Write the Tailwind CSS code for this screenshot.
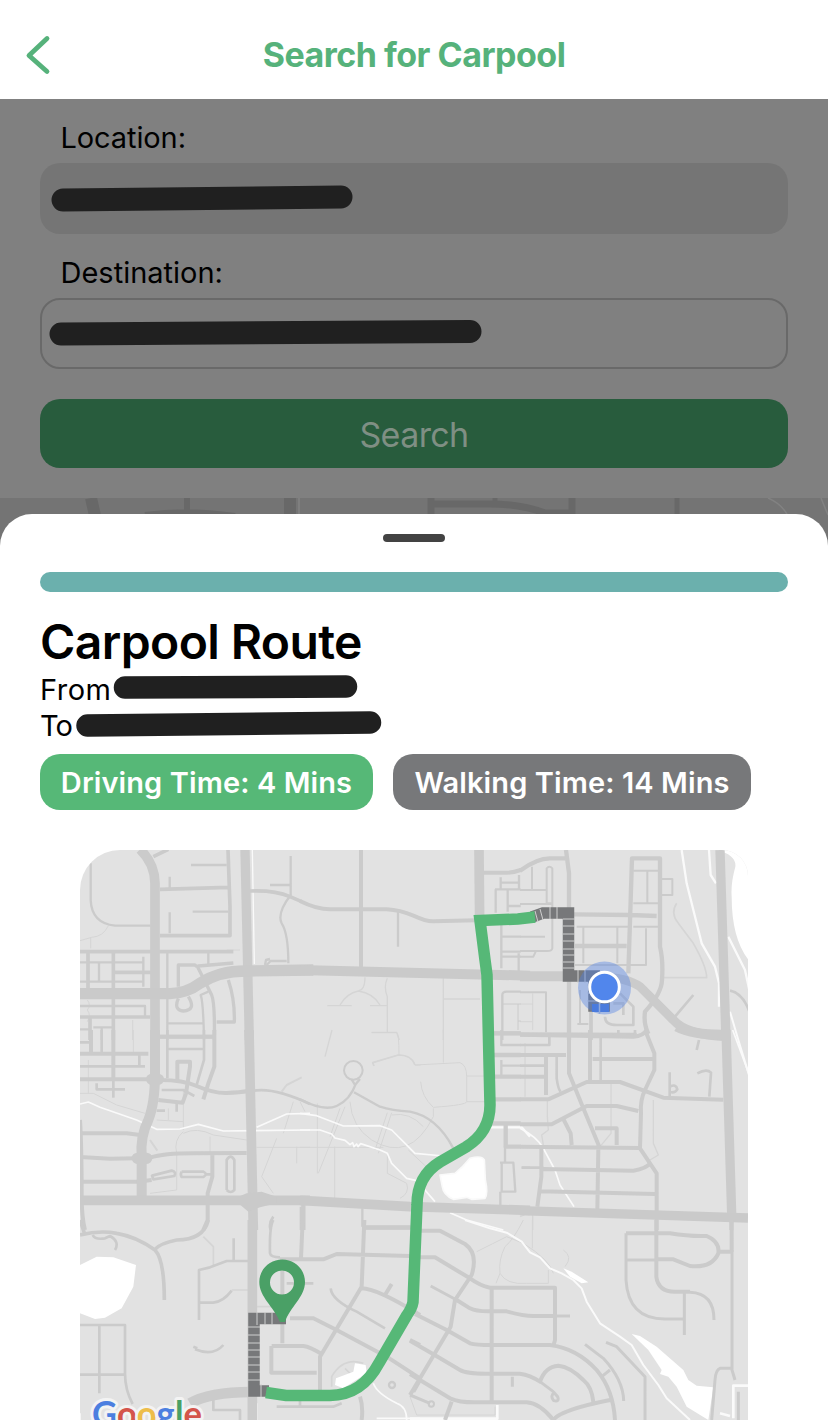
<!DOCTYPE html>
<html lang="en">
<head>
<meta charset="utf-8">
<title>Search for Carpool</title>
<script src="https://cdn.jsdelivr.net/npm/@tailwindcss/browser@4"></script>
</head>
<body class="bg-white">
<div class="w-[828px] h-[1420px] overflow-hidden flex flex-col font-['Inter',sans-serif] text-black">
  <header class="h-[99px] shrink-0 grid grid-cols-[80px_1fr_80px] pt-[11px] items-center bg-white">
    <svg class="w-[26px] h-[42px] ml-[25px]" viewBox="0 0 26 42" fill="none" stroke="#56b27b" stroke-width="4.800" stroke-linecap="round" stroke-linejoin="round"><path d="M22 4.500L4 21.500L22 37.500"/></svg>
    <h1 class="text-center text-[34px] leading-[40px] font-bold tracking-[-0.5px] text-[#56b27b] whitespace-nowrap">Search for Carpool</h1>
  </header>
  <section class="h-[399px] shrink-0 bg-[#808080] px-10 flex flex-col">
    <label class="h-16 pt-5 pl-[20.500px] text-[29px] leading-[38px] tracking-[-0.1px]">Location:</label>
    <div class="h-[71px] rounded-[20px] bg-[#757575]">
      <svg class="block w-full h-full" viewBox="40 163 748 71"><path d="M63 200L341 197" stroke="#202020" stroke-width="23" stroke-linecap="round"/></svg>
    </div>
    <label class="h-16 pt-5 pl-[20.500px] text-[29px] leading-[38px]">Destination:</label>
    <div class="h-[71px] rounded-[20px] border-2 border-[#696969]">
      <svg class="block w-full h-full" viewBox="42 300 744 67"><path d="M61 334L470 331.500" stroke="#202020" stroke-width="23" stroke-linecap="round"/></svg>
    </div>
    <button class="mt-[30px] h-[69px] shrink-0 rounded-[20px] bg-[#285c3d] text-[#7f8f84] text-[34px] leading-[40px] tracking-[-0.6px] pt-[2px]">Search</button>
  </section>
  <div class="h-4 shrink-0 relative bg-[#747474]">
    <svg class="absolute left-0 top-0 w-[828px] h-[50px]" viewBox="0 498 828 50" fill="none" stroke="#686868">
      <rect x="0" y="498" width="828" height="50" fill="#747474" stroke="none"/>
      <path d="M91 498L96 520M290 498V530" stroke-width="12"/><path d="M187 498V513M145 515Q187 509 235 516" stroke-width="6"/>
      <path d="M431 498V520M431 504H490Q520 504 545 513H572M572 498V520" stroke-width="7"/><path d="M495 498V504M677 498V520" stroke-width="5"/>
      <path d="M299 498V520M768 498Q782 504 788 516M821 498L828 515" stroke="#828282" stroke-width="1.500"/>
    </svg>
  </div>
  <main class="relative flex-1 bg-white rounded-t-[32px] px-10 pt-5 flex flex-col">
    <div class="w-[62px] h-2 shrink-0 rounded-full bg-[#434343] self-center"></div>
    <div class="h-5 shrink-0 mt-[30px] rounded-full bg-[#6bb0ad]"></div>
    <h2 class="mt-5 h-[60px] shrink-0 text-[48px] leading-[60px] font-semibold tracking-[-0.6px]">Carpool Route</h2>
    <div class="h-9 shrink-0 flex items-center text-[29px] leading-9 tracking-[0.5px]"><span class="w-[73px]">From</span>
      <svg class="w-[245px] h-[26px] mt-[-7px]" viewBox="113 673 245 26"><path d="M125 686.500L346 685.500" stroke="#202020" stroke-width="22.500" stroke-linecap="round"/></svg>
    </div>
    <div class="h-9 shrink-0 flex items-center text-[29px] leading-9"><span class="w-[35px] tracking-[-1px]">To</span>
      <svg class="w-[308px] h-[28px] mt-[-5px]" viewBox="75 711 308 28"><path d="M87.500 726.500L370 723.500" stroke="#202020" stroke-width="22.500" stroke-linecap="round"/></svg>
    </div>
    <div class="mt-[10px] flex gap-5 text-[29px] leading-[57px] tracking-[0.1px] font-semibold text-white whitespace-nowrap">
      <span class="w-[333px] h-[55.500px] rounded-[20px] bg-[#56b877] text-center">Driving Time: 4 Mins</span>
      <span class="w-[358px] h-[55.500px] rounded-[20px] bg-[#77787a] text-center">Walking Time: 14 Mins</span>
    </div>
    <div class="mt-[40.500px] mx-10 h-[570px] shrink-0 rounded-tl-[40px] rounded-tr-[26px] overflow-hidden bg-[#e2e2e2]">
    <svg class="block w-[668px] h-[570px]" viewBox="80 850 668 570" fill="none" stroke="#cbcbcb" stroke-linejoin="round">
      <!-- minor footpaths and parcel lines -->
      <g stroke="#d5d5d5" stroke-width="3">
        <g transform="translate(80 840) scale(.33333)"><path d="M85 257Q70 290 35 292L0 302M32 292V325M440 330H480M22 480q12 15 0 30q12 15 0 35M158 540V600"/></g>
        <g transform="translate(300 840) scale(.33333)"><path d="M195 412Q195 450 175 453Q140 460 120 495M175 453Q220 460 240 495M82 497H155M210 497H262M262 415Q250 440 262 470V577M215 577H290L298 600M430 410V600M430 477H540M96 570L75 650" stroke-width="4"/></g>
        <g transform="translate(520 840) scale(.33333)"><path d="M470 190Q450 220 475 250L520 310Q560 380 560 413H430" stroke-width="5"/><path d="M38 460V570M0 492H38M0 545H38"/></g>
        <g transform="translate(80 1030) scale(.33333)"><path d="M0 190L40 190L110 225L195 250M230 270L310 275M310 180V300M310 305Q280 330 290 370V480L210 490M310 310Q350 290 400 315L500 330M390 320V370M265 235V270M640 215L610 310M590 325L545 440L580 490M530 352H690M650 350V400M660 215L675 245M25 90V190M160 0V70"/><path d="M605 185L620 165L665 142M210 330L232 362" stroke-width="6"/></g>
        <g transform="translate(300 1030) scale(.33333)"><path d="M215 8H290Q297 10 297 75M222 108L218 98L295 75Q335 75 345 105L480 98Q500 105 500 140V215Q500 225 400 232Q365 200 362 155M345 105H362M500 138H560M500 215H560M430 0V98M150 215Q155 290 215 330Q330 400 400 260V235M120 235L90 320M135 230L55 430M52 220V430M104 350V510M0 352H250M275 248L235 370M262 248L225 360M275 255Q330 245 370 290M262 375V430L320 460Q330 490 300 505M325 360L400 430"/><path d="M222 108L218 98L295 75Q335 75 345 105" stroke-width="5"/></g>
        <g transform="translate(520 1030) scale(.33333)"><path d="M82 210V260L85 300L65 315L70 345M273 160V310L240 350M400 210V340L415 375L390 390M15 40V200M0 560Q20 550 40 545M38 550V600" stroke-width="4"/></g>
        <g transform="translate(80 1220) scale(.33333)"><path d="M370 50L400 80V140M455 210H505M530 260H590M755 500V470Q790 410 850 430M795 445l15 15" stroke-width="5"/></g>
        <g transform="translate(410 1220) scale(.33333)"><path d="M200 95Q250 70 290 50L340 70Q420 120 430 160M340 0Q310 60 285 80Q265 120 270 160L258 190M367 0V85M270 160Q290 195 350 190H415V150M460 90Q490 110 465 140M0 530L20 585H255V560"/></g>
      </g>
      <!-- water -->
      <g stroke="#fafafa" stroke-width="5">
        <g transform="translate(520 840) scale(.33333)"><path d="M485 30L500 130L545 310L585 380L597 430V500M567 30L572 105L588 130M625 290L675 390L690 460" stroke-width="7"/><path d="M590 30Q650 45 646 80Q632 130 635 170Q635 300 690 365V0H590Z" fill="#fff" stroke="none"/><path d="M630 515L655 600L690 715" stroke-width="6"/></g>
        <g transform="translate(80 840) scale(.33333)"><path d="M517 30L523 372" stroke-width="4"/></g>
        <g transform="translate(80 1030) scale(.33333)"><path d="M0 222L25 216L60 232L170 270L230 298L300 297L355 283L430 303L690 300M530 292L620 252L690 250"/></g>
        <g transform="translate(300 1030) scale(.33333)"><path d="M0 250L50 257L130 288L240 287L275 300L345 370L430 378M0 300L60 300L95 312L105 324L135 331L150 344l8-6l4 12l8-8l4 8l8-9L240 360L262 370L275 400L320 445L350 452L405 515M450 548L500 570L610 600"/><path d="M420 435L465 430Q490 410 510 385Q545 375 553 390L556 450Q565 490 555 505L515 508L500 502L460 508Q430 495 427 470Z" fill="#fff"/><path d="M570 292H665L690 320" stroke-width="7"/></g>
        <g transform="translate(520 1030) scale(.33333)"><path d="M0 295Q50 320 70 355L105 420L120 465L162 530M638 0L690 140"/></g>
        <g transform="translate(80 1220) scale(.33333)"><path d="M0 135L50 110L100 112L168 135L160 200L125 265L75 293L45 297L0 280ZM768 475L820 455L825 430L857 435L860 460L790 505L765 495Z" fill="#fff" stroke="none"/><path d="M880 490Q890 520 950 550Q980 560 980 600M890 595H1020M530 550V600M0 580V600"/></g>
        <g transform="translate(410 1220) scale(.33333)"><path d="M165 0L240 25L290 38L335 65L360 97L390 112L420 145L455 160L490 180L515 205L530 245L570 310L630 350L665 375L700 435L745 495L770 535L840 600" stroke-width="6"/><path d="M460 145L485 155L535 187L515 190L480 170ZM665 342L690 348L740 380L820 450L835 480L860 497L910 502L895 600L830 560L800 500L775 470L750 462L755 450L715 390Z" fill="#fff" stroke="none"/><path d="M0 596H262V555M1014 497H970V595M930 580L960 588" stroke-width="8"/></g>
      </g>
      <!-- streets -->
      <g transform="translate(80 840) scale(.33333)">
        <path d="M32 70V180Q35 250 105 257H212M0 367H187M190 350V440M0 425H187M57 370V425M0 498H195V530M262 335V600M385 337V375M0 568H30M40 562H100M65 565V600M333 75H440M269 110V145M338 215H445M269 217V280M632 48V165Q590 220 605 250Q625 280 625 370M570 135H630M555 375l3-15l12-3M560 375l12-12H620M262 550H370M385 455L362 465Q370 485 372 600" stroke-width="7"/>
        <path d="M220 50L265 28M0 335H460M240 148L445 142M240 287H450L450 200L444 30M510 153Q585 150 630 170L665 185M100 335V600M24 335V455M105 397H215M0 531H210M30 535V600M240 590H405" stroke-width="11"/>
        <path d="M350 380L345 375H295V440M350 375L370 415L395 465Q405 490 403 600M355 378L460 369M445 420Q465 480 463 546H410M325 470Q350 510 310 513Q280 510 295 475" stroke-width="10"/>
        <path d="M180 28Q224 70 225 130V600" stroke-width="29"/><path d="M495 30L508 600" stroke-width="28"/>
        <path d="M0 461H270Q320 460 360 430Q420 392 500 393L700 390" stroke-width="34" stroke="#cacaca"/>
      </g>
      <g transform="translate(300 840) scale(.33333)">
        <path d="M294 215V320M602 112V145M602 128H657M657 105V145M585 148H662M587 148V218M623 148V215M623 198H662M604 240V385M604 290H662M604 335H662M604 350H662M656 340V395M607 600V465Q607 455 620 455H662" stroke-width="7"/><path d="M607 492H662M654 492V570M654 543H662" stroke-width="3"/>
        <path d="M183 30V390M0 183Q50 208 90 208H260Q300 210 340 227Q380 245 400 244L530 241M550 98H620Q640 98 662 90M580 580H662" stroke-width="12"/>
        <path d="M537 28L539 250" stroke-width="29"/><path d="M0 390Q300 398 690 407" stroke-width="30" stroke="#cacaca"/>
      </g>
      <g transform="translate(520 840) scale(.33333)">
        <path d="M0 92Q50 55 90 55H135M138 30L147 100V600M160 223L330 225L410 228M325 400L336 55H420V320Q430 360 426 420Q425 460 375 515Q370 550 385 582M165 318H320M0 583L350 585" stroke-width="13"/>
        <path d="M80 190V85Q88 75 97 85V190H80M0 150H78M36 80V150M0 192H95M97 190V325Q95 335 75 333H0M0 290H75M0 350H40L47 335M190 260V370M292 262V370M170 260H325M165 375H325M340 92H415M382 95V190M340 190H420M340 260H420M378 265V375H330M425 117H457V165H425M180 450V552M172 552H205M0 457H78V577" stroke-width="6"/>
        <path d="M213 470V600" stroke-width="11"/>
        <path d="M520 465L465 530M255 530Q255 555 290 555H340V500L300 460M280 490h30v35M630 452Q670 460 690 520" stroke-width="8"/>
        <path d="M600 30L618 600" stroke-width="28"/><path d="M0 409H210" stroke-width="30"/><path d="M200 412Q310 405 360 440L460 540Q500 585 620 590" stroke-width="27"/>
      </g>
      <g transform="translate(80 1030) scale(.33333)">
        <path d="M0 37H35M65 0V70M0 109H195M178 75V105M50 160V178H135M262 0V145M265 57H370M372 0V90L350 165M245 180H310L343 198M230 242H255M290 220V245M580 560Q565 580 572 600" stroke-width="8"/>
        <path d="M33 0V70M0 71H205M100 0V150M240 20H400M403 0V110L385 160L370 208M292 150V95H330V110L318 190L308 218L235 210M0 310H140L180 315M0 381L90 386L170 385M210 383Q250 370 340 370L500 369M0 455H170L215 450M397 375V440L383 490V570L370 600M0 270Q5 350 5 500Q5 560 15 600M665 530V600" stroke-width="12"/>
        <path d="M100 150V203" stroke-width="8"/><path d="M0 148H210M240 150Q310 150 350 168Q400 190 440 189Q480 187 505 183" stroke-width="12"/><path d="M505 183L530 181Q590 175 690 222" stroke-width="8"/>
        <path d="M216 437L275 422Q290 425 283 438L220 448ZM305 425H370Q385 433 370 441H305Q300 433 305 425M375 433H395M440 480V390Q452 370 463 390V480Q452 492 440 480" stroke-width="8"/>
        <path d="M225 0V130Q225 220 205 270Q180 320 185 380V500" stroke-width="30"/><path d="M507 0L520 600" stroke-width="29"/><path d="M215 148h20M172 385h28" stroke-width="34" stroke-linecap="round"/><path d="M0 511H690" stroke-width="29" stroke="#cacaca"/><path d="M475 500L500 490L545 485L590 500V520L540 532L505 545L475 520Z" fill="#cacaca" stroke="none"/>
      </g>
      <g transform="translate(300 1030) scale(.33333)">
        <circle cx="160" cy="121" r="28" stroke-width="6"/><path d="M155 148L165 165L180 147M168 160Q150 210 110 228Q70 245 0 208M162 187L240 230Q275 242 330 245Q410 260 460 355" stroke-width="7"/>
        <path d="M604 0V45H662M604 90V135M604 107H662M600 398H640L646 485H605V398M615 350V398M601 485V530M665 413H690M187 535V590" stroke-width="7"/>
        <path d="M580 10H662M580 75H662M580 140H662M580 208H662M570 280H662M617 285V350H662M10 525V600M187 592H340" stroke-width="13"/>
        <path d="M0 511L330 530L690 541" stroke-width="29" stroke="#cacaca"/>
      </g>
      <g transform="translate(520 1030) scale(.33333)">
        <path d="M0 14L340 20Q370 18 380 0M375 0L403 70V120L375 180Q360 210 363 250L360 355L410 430V600M0 75H138M0 140H75M78 80V195M0 208H85L200 156H300L430 203L610 209M218 87H400M0 283H95L200 228H290L355 243M130 267L152 310L155 345M147 0V130L190 235L238 350M210 0V155M0 350L360 354M225 295H290V345M64 350V440L52 530M235 355L232 540M70 417L340 422Q380 415 390 400M60 484L405 492M634 540V600" stroke-width="12"/>
        <path d="M0 45H88V20M0 107H72M110 80V145Q115 180 122 185M242 20V150M295 0V12M345 0V12M537 30L530 60M449 127V200M450 170Q468 160 472 178Q465 190 450 186M532 130Q560 115 573 128L568 200M5 413H70" stroke-width="8"/>
        <path d="M0 542L684 564" stroke-width="28" stroke="#cacaca"/><path d="M618 0L635 550" stroke-width="28"/><path d="M470 -10Q520 16 620 14" stroke-width="30"/>
      </g>
      <g transform="translate(80 1220) scale(.33333)">
        <path d="M0 0L15 45M0 45Q60 30 110 40Q170 50 225 90Q253 120 253 240M225 88Q240 70 290 60Q370 60 385 0" stroke-width="11"/>
        <path d="M38 45Q45 60 75 55L90 48Q120 65 105 90M461 55V120M505 123H440L390 142L357 150V300M360 248H400Q430 245 455 212M345 388Q400 410 430 375M340 380l12 5M0 315H135V460Q135 510 158 552M58 318V520M0 464H135M580 0Q568 20 570 100Q572 112 600 112M620 190H700M752 205Q755 240 830 275L915 325M590 560H760L785 550M660 540V560M400 540V570H480V600" stroke-width="8"/>
        <path d="M668 0L663 115M600 118H730L770 102L990 108M850 23H990M853 0L845 200L720 410V510M845 205Q890 205 1020 285M935 192L915 225M630 295H700L770 330L920 410L1020 475M607 150V370M575 378H670Q690 380 730 405M574 378V458H710M840 530Q850 560 845 600M990 360L1020 375M1020 480L1000 515" stroke-width="12"/>
        <path d="M517 0V600" stroke-width="29"/><path d="M330 550Q390 515 520 516" stroke-width="32"/><circle cx="936" cy="495" r="9" stroke-width="7"/>
      </g>
      <g transform="translate(410 1220) scale(.33333)">
        <path d="M30 32H90L165 72Q205 100 185 165L135 240L122 320L0 525M30 112H75L180 175Q210 197 240 203H435V360L430 378M245 205V550M140 240L180 265Q200 275 240 274H290Q340 288 370 288H435M15 282L110 330L180 370Q200 376 260 375H420Q500 385 560 450Q610 510 615 600M0 362L65 400L150 450Q170 462 240 461H330Q360 465 390 485Q405 440 445 437Q480 440 520 480Q545 500 550 545M0 462L120 535Q150 548 200 547H350Q390 550 430 600Q450 570 600 540M125 545L105 600" stroke-width="12"/>
        <path d="M62 198L140 240M435 288H480M307 470V500M390 485L430 515M434 517q-15 10-3 25q18 5 12-12L430 515M525 373L580 415Q640 480 641 543M575 470L600 450M588 367L620 380L705 470V600M0 525L60 550M648 120H735M648 40V180Q655 300 770 297H820M823 215V345M840 217Q912 220 912 300" stroke-width="9"/>
        <circle cx="64" cy="552" r="8" stroke-width="6"/><path d="M648 40H780Q840 50 890 48Q930 65 925 100Q905 145 840 138L790 118H740M739 0V170Q745 217 800 215H840M925 95H965M965 0V95" stroke-width="12"/>
        <path d="M966 90V450L975 480M965 445H930Q917 450 915 480L905 600M985 515V600" stroke-width="9"/>
      </g>
      <!-- walking legs -->
      <g stroke="#77787a" stroke-width="11.500" stroke-linejoin="miter">
        <path d="M532 917L543 913H568.500V976H600"/><path d="M594 971V1006H610"/><path d="M286 1318.500H254V1391H269"/>
        <g stroke="#cfcfcf" stroke-width="1">
          <path d="M535 911l3 11M540 909l3 11M550 907v12M557 907v12M563 919h12M563 926h12M563 934h12M563 941h12M563 949h12M563 955h12M563 962h12M563 968h12M578 970v13M585 970v13M587 985h12M587 993h12M587 1001h12M600 1000v13"/>
          <path d="M257 1312v13M265 1312v13M272 1312v13M248 1327h12M248 1335h12M248 1343h12M248 1350h12M248 1357h12M248 1365h12M248 1372h12M248 1380h12M261 1384v13"/>
        </g>
      </g>
      <!-- driving leg -->
      <path d="M535 917L518 919L480 920.500L485 960L487 975L490 1105Q490 1132 466 1147L440 1162Q417 1176 417 1205L413 1302Q412 1308 407 1315L379 1363Q362 1395 330 1395.500L286 1395.500L266 1392.500" stroke="#56b877" stroke-width="11.500" stroke-linejoin="miter"/>
      <circle cx="604.500" cy="988" r="26.500" fill="#4d7fe5" fill-opacity=".4" stroke="none"/>
      <path d="M592 1004h17v8h-17z" fill="#4a7bdd" stroke="none"/><path d="M599.500 1002v12" stroke="#8fa9da" stroke-width="1.500"/>
      <circle cx="604.500" cy="987" r="14.800" fill="#5186ec" stroke="#fff" stroke-width="3"/>
      <path fill-rule="evenodd" d="M282.300 1259.500C269.500 1259.500 259.300 1269.500 259.300 1282C259.300 1297 274 1307 280 1322H285C290 1307 305 1297 305 1282C305 1269.500 295 1259.500 282.300 1259.500ZM282 1270.500A12 12 0 1 1 282 1294.500A12 12 0 1 1 282 1270.500Z" fill="#4aa066" stroke="none"/>
      <text x="92" y="1427" textLength="110" lengthAdjust="spacingAndGlyphs" stroke="#f3f3f3" stroke-width="6" paint-order="stroke" font-family="Lato" font-weight="700" font-size="37"><tspan fill="#4c7fe0">G</tspan><tspan fill="#d4544b">o</tspan><tspan fill="#edbd4a">o</tspan><tspan fill="#4c7fe0">g</tspan><tspan fill="#4aa066">l</tspan><tspan fill="#d4544b">e</tspan></text>
    </svg>
    </div>
  </main>
</div>
</body>
</html>
